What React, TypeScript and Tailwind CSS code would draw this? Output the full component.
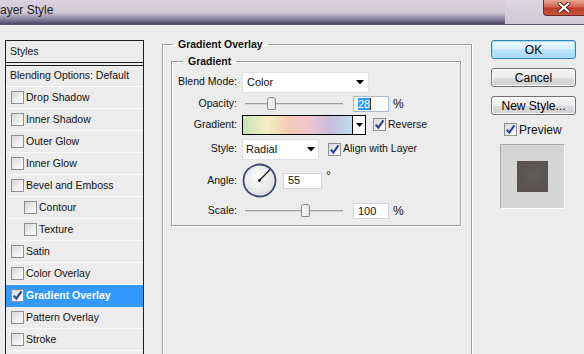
import React from 'react';

type CheckProps = { checked?: boolean };

const Check = ({ checked }: CheckProps) => (
  <span className="flex h-[13px] w-[13px] shrink-0 items-center justify-center border border-[#8e8f8f] bg-[linear-gradient(135deg,#d6d6d6,#f4f4f4_70%,#ffffff)]">
    {checked && (
      <svg width="11" height="11" viewBox="0 0 11 11">
        <path d="M1.8 5.6 L4.3 8.6 L9.4 1.4" fill="none" stroke="#2b3f94" strokeWidth="2.1" />
      </svg>
    )}
  </span>
);

const Arrow = () => (
  <svg width="8" height="5" viewBox="0 0 8 5">
    <path d="M0 0 H8 L4 4.5 Z" fill="#000" />
  </svg>
);

const Slider = ({ pos }: { pos: string }) => (
  <div className="ml-[3px] flex h-[14px] w-[98px] items-center">
    <div className="relative h-[2px] w-full border-t border-[#9d9d9d] border-b-white bg-[#d8d8d8]">
      <span
        className={`absolute top-[-7px] ${pos} h-[13px] w-[9px] rounded-t-[3px] rounded-b-[1px] border border-[#8a8a8a] bg-[linear-gradient(90deg,#fafafa,#e2e2e2)]`}
      />
    </div>
  </div>
);

const Row = ({ label, h, children }: { label: string; h: string; children: React.ReactNode }) => (
  <div className={`flex items-center ${h}`}>
    <span className="mr-[5px] w-[65px] shrink-0 text-right">{label}</span>
    {children}
  </div>
);

const styleItems = [
  { name: 'Drop Shadow' },
  { name: 'Inner Shadow' },
  { name: 'Outer Glow' },
  { name: 'Inner Glow' },
  { name: 'Bevel and Emboss' },
  { name: 'Contour', sub: true },
  { name: 'Texture', sub: true },
  { name: 'Satin' },
  { name: 'Color Overlay' },
  { name: 'Gradient Overlay', on: true },
  { name: 'Pattern Overlay' },
  { name: 'Stroke' },
];

export default function App() {
  return (
    <div className="flex h-[354px] w-[584px] flex-col overflow-hidden bg-[#ececec] font-['Liberation_Sans',Arial,sans-serif] text-[10.5px] text-[#111]">
      {/* title bar */}
      <div className="flex h-[25px] shrink-0 border-b border-[#5b586d]">
        <div className="flex-1 bg-[linear-gradient(#d9d1dd,#d3cad8_50%,#8f88a3_78%,#4d4964)] pt-[3px] text-[12px] leading-[15px] text-[#1a1a1a]">
          ayer Style
        </div>
        <div className="flex w-[79px] items-start justify-end bg-[linear-gradient(#ddd7e0,#cfc9d5)]">
          <div className="flex h-[16px] w-[41px] items-center justify-center rounded-bl-[4px] border-b border-l border-[#6d2a23] bg-[linear-gradient(#eaa999,#d46450_45%,#c0402a_55%,#c7553c)]">
            <svg width="14" height="11" viewBox="0 0 14 11">
              <path d="M2.5 1.5 L11.5 9.5 M11.5 1.5 L2.5 9.5" stroke="#5a1a14" strokeWidth="4" strokeLinecap="round" />
              <path d="M2.5 1.5 L11.5 9.5 M11.5 1.5 L2.5 9.5" stroke="#fff" strokeWidth="2.2" strokeLinecap="round" />
            </svg>
          </div>
        </div>
      </div>

      <div className="flex flex-1">
        {/* styles list */}
        <div className="mt-[15px] ml-[5px] flex h-[340px] w-[139px] shrink-0 flex-col border border-[#1e1e1e]">
          <div className="flex h-[22px] items-center border-b border-[#1e1e1e] pl-[4px]">Styles</div>
          <div className="mt-[2px] flex flex-1 flex-col border-t border-[#1e1e1e]">
            <div className="flex h-[21px] items-center border-b border-white pl-[4px]">Blending Options: Default</div>
            {styleItems.map((s) => (
              <div
                key={s.name}
                className={`flex h-[22px] items-center gap-[2px] border-b ${s.on ? 'border-[#3399ff] bg-[#3399ff] font-bold text-white' : 'border-[#fafafa]'} ${s.sub ? 'pl-[18px]' : 'pl-[5px]'}`}
              >
                <Check checked={s.on} />
                <span>{s.name}</span>
              </div>
            ))}
          </div>
        </div>

        {/* gradient overlay panel */}
        <fieldset className="mt-[12px] ml-[18px] h-[340px] w-[310px] min-w-0 shrink-0 border border-[#9c9c9c] pr-[10px] pl-[8px] shadow-[inset_1px_1px_0_#fff,1px_1px_0_#fff]">
          <legend className="ml-[2px] px-[5px] leading-[14px] font-bold">Gradient Overlay</legend>
          <fieldset className="mt-[3px] min-w-0 border border-[#9c9c9c] pb-[1px] shadow-[inset_1px_1px_0_#fff,1px_1px_0_#fff]">
            <legend className="ml-[11px] px-[5px] leading-[14px] font-bold">Gradient</legend>
            <div className="mt-[3px] flex flex-col">
              <Row label="Blend Mode:" h="h-[22px]">
                <div className="flex h-[21px] w-[127px] items-center justify-between border border-[#e2e2e2] bg-white pr-[4px] pl-[4px] text-[11px]">
                  <span>Color</span>
                  <Arrow />
                </div>
              </Row>
              <Row label="Opacity:" h="h-[21px]">
                <Slider pos="left-[22px]" />
                <div className="ml-[10px] flex h-[16px] w-[36px] items-center border border-[#a7bad3] bg-white pl-[4px] text-[11px]">
                  <span className="bg-[#3399ff] leading-[12px] text-white">28</span>
                  <span className="h-[12px] w-[1px] bg-[#5b2a00]" />
                </div>
                <span className="ml-[4px] text-[12px]">%</span>
              </Row>
              <Row label="Gradient:" h="h-[21px]">
                <div className="flex h-[20px] w-[124px] border border-black">
                  <div className="flex-1 bg-[linear-gradient(90deg,#c8e2b7,#f3efc0_22%,#f4cbb5_42%,#f0c5d0_60%,#c8bddd_80%,#bcdeee)]" />
                  <div className="flex w-[13px] items-center justify-center border-l border-black bg-white">
                    <svg width="7" height="4" viewBox="0 0 7 4">
                      <path d="M0 0 H7 L3.5 4 Z" fill="#000" />
                    </svg>
                  </div>
                </div>
                <span className="ml-[7px] flex items-center gap-[2px]">
                  <Check checked />
                  <span>Reverse</span>
                </span>
              </Row>
              <Row label="Style:" h="h-[28px]">
                <div className="flex h-[21px] w-[77px] items-center justify-between border border-[#e2e2e2] bg-white pr-[3px] pl-[3px] text-[11px]">
                  <span>Radial</span>
                  <Arrow />
                </div>
                <span className="ml-[9px] flex items-center gap-[2px]">
                  <Check checked />
                  <span>Align with Layer</span>
                </span>
              </Row>
              <Row label="Angle:" h="h-[35px]">
                <svg width="35" height="35" viewBox="0 0 35 35">
                  <defs>
                    <radialGradient id="dial" cx="45%" cy="40%" r="60%">
                      <stop offset="0%" stopColor="#ffffff" />
                      <stop offset="100%" stopColor="#dedede" />
                    </radialGradient>
                  </defs>
                  <circle cx="17.5" cy="17.5" r="16" fill="url(#dial)" stroke="#3e4a72" strokeWidth="1.8" />
                  <line x1="17.5" y1="17.5" x2="28" y2="6.5" stroke="#111" strokeWidth="1.1" />
                  <circle cx="17.5" cy="17.5" r="1.4" fill="#111" />
                </svg>
                <div className="ml-[6px] flex h-[16px] w-[39px] items-center border border-[#d3d6db] bg-white pl-[4px] text-[11px]">55</div>
                <span className="ml-[4px] self-start mt-[6px] text-[12px] leading-[14px]">°</span>
              </Row>
              <Row label="Scale:" h="h-[26px]">
                <Slider pos="left-[56px]" />
                <div className="ml-[10px] flex h-[16px] w-[36px] items-center border border-[#d3d6db] bg-white pl-[4px] text-[11px]">100</div>
                <span className="ml-[4px] text-[12px]">%</span>
              </Row>
            </div>
          </fieldset>
        </fieldset>

        {/* buttons */}
        <div className="mt-[15px] ml-[19px] flex w-[85px] shrink-0 flex-col text-[12px]">
          <div className="flex flex-col gap-[9px]">
            <button className="h-[19px] w-[85px] rounded-[3px] border border-[#3c7fb1] bg-[linear-gradient(#eaf6fd,#d9f0fc_50%,#bee6fd_50%,#a7d9f5)] leading-none text-black shadow-[inset_0_0_0_1px_#9ee2f8]">
              OK
            </button>
            <button className="h-[19px] w-[85px] rounded-[3px] border border-[#707070] bg-[linear-gradient(#f6f6f6,#ebebeb_50%,#dddddd_50%,#cfcfcf)] leading-none text-black shadow-[inset_0_0_0_1px_#fcfcfc]">
              Cancel
            </button>
            <button className="h-[19px] w-[85px] rounded-[3px] border border-[#707070] bg-[linear-gradient(#f6f6f6,#ebebeb_50%,#dddddd_50%,#cfcfcf)] leading-none text-black shadow-[inset_0_0_0_1px_#fcfcfc]">
              New Style...
            </button>
          </div>
          <div className="mt-[8px] flex h-[13px] items-center gap-[2px] pl-[13px]">
            <Check checked />
            <span className="leading-none">Preview</span>
          </div>
          <div className="mt-[8px] ml-[9px] flex h-[65px] w-[65px] items-center justify-center border border-t-[#a9a9a9] border-l-[#a9a9a9] border-r-white border-b-white bg-[#d5d5d5]">
            <div className="h-[31px] w-[31px] bg-[radial-gradient(circle_at_55%_45%,#5d5e58,#5a5352_70%,#5b5051)]" />
          </div>
        </div>
      </div>
    </div>
  );
}
